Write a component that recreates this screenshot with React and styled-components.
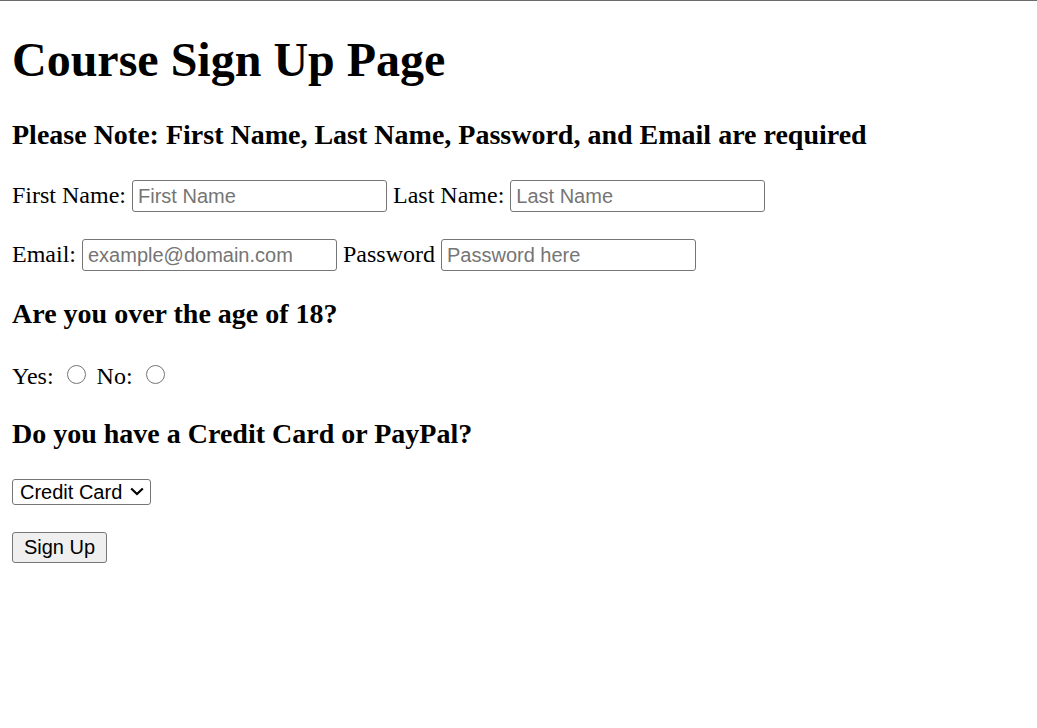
import styled, { createGlobalStyle } from "styled-components";

const GlobalStyle = createGlobalStyle`
  html, body {
    margin: 0;
    padding: 0;
    background: #ffffff;
  }
  body {
    font-family: "Liberation Serif", "Times New Roman", serif;
    font-size: 24px;
    color: #000000;
  }
`;

const Page = styled.div`
  border-top: 1px solid #6b6b6b;
  padding: 0 12px;
  min-height: 727px;
`;

const Title = styled.h1`
  font-size: 48px;
  line-height: 55px;
  font-weight: bold;
  margin: 31px 0 32px;
`;

const Heading = styled.h3`
  font-size: 28px;
  line-height: 32px;
  font-weight: bold;
  margin: ${(p) => p.$top || 0}px 0 ${(p) => p.$bottom || 28}px;
`;

const Form = styled.form`
  display: flex;
  flex-direction: column;
  align-items: flex-start;
`;

const Row = styled.div`
  display: flex;
  align-items: baseline;
  gap: 6px;
  line-height: 28px;
  margin-bottom: ${(p) => p.$bottom || 0}px;
`;

const RadioRow = styled.div`
  padding-top: 1px;
  line-height: normal;
  white-space: nowrap;
`;

const Label = styled.label`
  font-size: 24px;
  white-space: nowrap;
`;

const TextInput = styled.input`
  box-sizing: border-box;
  width: 255px;
  height: 32px;
  padding: 1px 5px;
  border: 1px solid #767676;
  border-radius: 3px;
  font-family: "Liberation Sans", Arial, sans-serif;
  font-size: 20px;
  color: #000;
  background: #fff;
  &::placeholder {
    color: #757575;
  }
`;

const Radio = styled.input`
  appearance: none;
  box-sizing: border-box;
  width: 19px;
  height: 19px;
  margin: 6px 5px 0 7px;
  border: 1.5px solid #767676;
  border-radius: 50%;
  background: #fff;
  vertical-align: 0;
  &:checked {
    border-color: #0075ff;
    box-shadow: inset 0 0 0 3px #fff;
    background: #0075ff;
  }
`;

const SelectBox = styled.div`
  position: relative;
  width: 139px;
  height: 26px;
  margin-bottom: 28px;
`;

const Select = styled.select`
  appearance: none;
  box-sizing: border-box;
  width: 100%;
  height: 100%;
  padding: 0 0 0 7px;
  border: 1px solid #767676;
  border-radius: 3px;
  font-family: "Liberation Sans", Arial, sans-serif;
  font-size: 20px;
  color: #000;
  background: #fff;
`;

const Chevron = styled.svg`
  position: absolute;
  right: 7px;
  top: 9px;
  pointer-events: none;
`;

const Button = styled.button`
  box-sizing: border-box;
  width: 95px;
  height: 31px;
  padding: 1px 9px;
  border: 1px solid #767676;
  border-radius: 3px;
  background: #efefef;
  font-family: "Liberation Sans", Arial, sans-serif;
  font-size: 20px;
  color: #000;
`;

export default function App() {
  return (
    <Page>
      <GlobalStyle />
      <Title>Course Sign Up Page</Title>
      <Heading $bottom={29}>
        Please Note: First Name, Last Name, Password, and Email are required
      </Heading>
      <Form onSubmit={(e) => e.preventDefault()}>
        <Row $bottom={27}>
          <Label>First Name:</Label>
          <TextInput type="text" placeholder="First Name" />
          <Label>Last Name:</Label>
          <TextInput type="text" placeholder="Last Name" />
        </Row>
        <Row>
          <Label>Email:</Label>
          <TextInput type="email" placeholder="example@domain.com" />
          <Label>Password</Label>
          <TextInput type="password" placeholder="Password here" />
        </Row>
        <Heading $top={27}>Are you over the age of 18?</Heading>
        <RadioRow>
          <Label>Yes:</Label> <Radio type="radio" name="age" />{" "}
          <Label>No:</Label> <Radio type="radio" name="age" />
        </RadioRow>
        <Heading $top={28}>Do you have a Credit Card or PayPal?</Heading>
        <SelectBox>
          <Select defaultValue="credit">
            <option value="credit">Credit Card</option>
            <option value="paypal">PayPal</option>
          </Select>
          <Chevron width="14" height="9" viewBox="0 0 14 9">
            <path d="M1.2 1.5 L7 7 L12.8 1.5" fill="none" stroke="#000" strokeWidth="2.2" />
          </Chevron>
        </SelectBox>
        <Button type="submit">Sign Up</Button>
      </Form>
    </Page>
  );
}
